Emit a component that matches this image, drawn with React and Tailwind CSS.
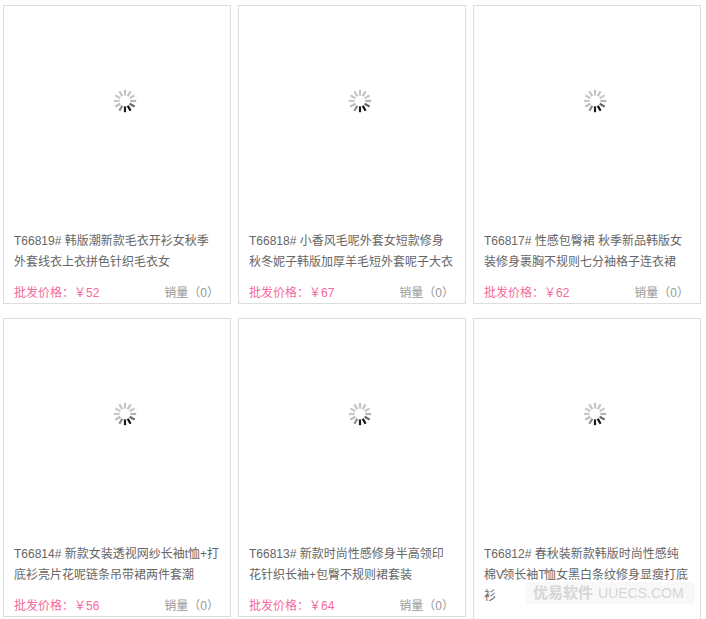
const narrow = 'tracking-[-1.7px]';

const products = [
  { id: 'T66819#', title: '韩版潮新款毛衣开衫女秋季外套线衣上衣拼色针织毛衣女', price: 52 },
  { id: 'T66818#', title: '小香风毛呢外套女短款修身秋冬妮子韩版加厚羊毛短外套呢子大衣', price: 67 },
  { id: 'T66817#', title: '性感包臀裙 秋季新品韩版女装修身裹胸不规则七分袖格子连衣裙', price: 62 },
  { id: 'T66814#', title: '新款女装透视网纱长袖t恤+打底衫亮片花呢链条吊带裙两件套潮', price: 56 },
  { id: 'T66813#', title: '新款时尚性感修身半高领印花针织长袖+包臀不规则裙套装', price: 64 },
  {
    id: 'T66812#',
    title: (
      <>
        春秋装新款韩版时尚性感纯棉<span className={narrow}>V</span>领长袖<span className={narrow}>T</span>恤女黑白条纹修身显瘦打底衫
      </>
    ),
    price: 59,
  },
];

// tick colours, clockwise from 12 o'clock
const tickColors = ['#c4c4c4', '#c4c4c4', '#c8c8c8', '#b4b4b4', '#666', '#111', '#1c1c1c', '#8a8a8a', '#bbb', '#c8c8c8', '#c8c8c8', '#c4c4c4'];

function Spinner() {
  return (
    <svg width="24" height="24" viewBox="0 0 24 24">
      {tickColors.map((color, i) => (
        <line
          key={i}
          x1="12"
          y1="0.8"
          x2="12"
          y2="6.6"
          stroke={color}
          strokeWidth="2.2"
          transform={`rotate(${i * 30} 12 12)`}
        />
      ))}
    </svg>
  );
}

function ProductCard({ id, title, price }) {
  return (
    <div className="border border-[#ddd] bg-white">
      <div className="h-[225px] flex items-center justify-center pl-[15px] pb-[36px]">
        <Spinner />
      </div>
      <p className="px-[10px] text-[12px] leading-[21px] text-[#666]">
        {id} {title}
      </p>
      <div className="flex justify-between items-center pl-[10px] pr-[11px] mt-[10px] h-[20px] text-[12px]">
        <span className="text-[#f46a9b]">批发价格：￥{price}</span>
        <span className="text-[#999]">销量（0）</span>
      </div>
    </div>
  );
}

export default function App() {
  return (
    <div className="relative h-[619px] w-[706px] overflow-hidden bg-white pl-[3px] pt-[5px] font-['Liberation_Sans','Noto_Sans_CJK_SC',sans-serif]">
      <div className="grid grid-cols-[228px_228px_228px] gap-x-[7px] gap-y-[14px] items-start">
        {products.map((p) => (
          <ProductCard key={p.id} {...p} />
        ))}
      </div>
      <div className="absolute left-[526px] top-[582px] w-[169px] h-[22px] rounded bg-[#f7f7f7]/90 flex items-center pl-[7px] gap-[5px] text-[#d6d6d6]">
        <span className="text-[15px] font-bold">优易软件</span>
        <span className="text-[14px]">UUECS.COM</span>
      </div>
    </div>
  );
}
